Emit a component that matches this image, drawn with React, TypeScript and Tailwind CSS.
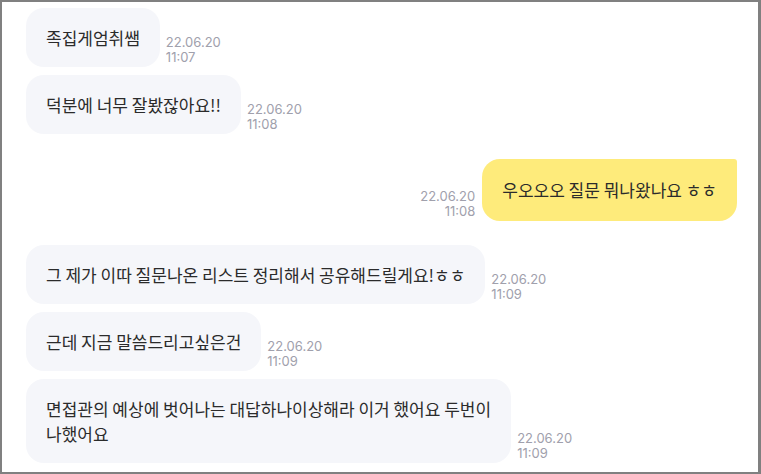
import React from 'react';

type Message = {
  side: 'left' | 'right';
  lines: string[];
  time: string;
  mt: string;
};

const messages: Message[] = [
  { side: 'left', lines: ['족집게엄취쌤'], time: '11:07', mt: 'mt-0' },
  { side: 'left', lines: ['덕분에 너무 잘봤잖아요!!'], time: '11:08', mt: 'mt-[8px]' },
  { side: 'right', lines: ['우오오오 질문 뭐나왔나요 ㅎㅎ'], time: '11:08', mt: 'mt-[25px]' },
  { side: 'left', lines: ['그 제가 이따 질문나온 리스트 정리해서 공유해드릴게요!ㅎㅎ'], time: '11:09', mt: 'mt-[24px]' },
  { side: 'left', lines: ['근데 지금 말씀드리고싶은건'], time: '11:09', mt: 'mt-[8px]' },
  {
    side: 'left',
    lines: ['면접관의 예상에 벗어나는 대답하나이상해라 이거 했어요 두번이', '나했어요'],
    time: '11:09',
    mt: 'mt-[8px]',
  },
];

const korean = "font-['Noto_Sans_CJK_KR','Noto_Sans',sans-serif]";

const Stamp: React.FC<{ time: string; right?: boolean }> = ({ time, right }) => (
  <div
    className={`flex flex-col font-['Inter',sans-serif] text-[13px] leading-[15px] text-[#a0a0ac] pb-[2px] ${
      right ? 'items-end' : 'items-start'
    }`}
  >
    <span>22.06.20</span>
    <span>{time}</span>
  </div>
);

export default function App() {
  return (
    <div className="w-[761px] h-[474px] bg-white border-2 border-r-[3px] border-[#808080] overflow-hidden">
      <div className="flex flex-col pt-[6px] pl-[24px] pr-[21px]">
        {messages.map((m, i) =>
          m.side === 'left' ? (
            <div key={i} className={`flex items-end gap-[6px] ${m.mt}`}>
              <div
                className={`bg-[#f5f6fa] rounded-[18px] px-[20px] py-[17px] text-[17px] leading-[25px] text-[#2b2b2b] ${korean}`}
              >
                {m.lines.map((l, j) => (
                  <div key={j} className="whitespace-nowrap">{l}</div>
                ))}
              </div>
              <Stamp time={m.time} />
            </div>
          ) : (
            <div key={i} className={`flex items-end justify-end gap-[7px] ${m.mt}`}>
              <Stamp time={m.time} right />
              <div
                className={`bg-[#feeb7b] rounded-[18px] rounded-tr-[3px] px-[20px] py-[18px] text-[17px] leading-[26px] text-[#2b2b2b] ${korean}`}
              >
                {m.lines.map((l, j) => (
                  <div key={j} className="whitespace-nowrap">{l}</div>
                ))}
              </div>
            </div>
          )
        )}
      </div>
    </div>
  );
}
